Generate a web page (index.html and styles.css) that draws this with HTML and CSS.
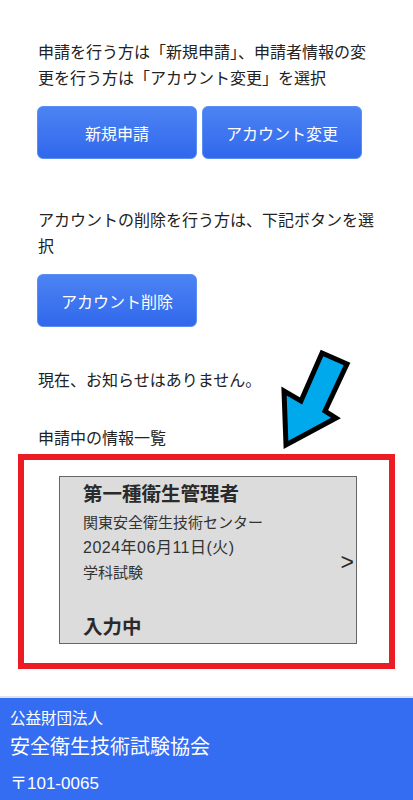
FILE: index.html
```html
<!DOCTYPE html>
<html lang="ja">
<head>
    <meta charset="UTF-8">
    <meta name="viewport" content="width=device-width, initial-scale=1.0">
    <title>マイページ</title>
    <link rel="stylesheet" href="styles.css">
</head>
<body>
    <div class="main">
        <div class="section">
            <p class="note">申請を行う方は「新規申請」、申請者情報の変更を行う方は「アカウント変更」を選択</p>
            <div class="btn-row">
                <button class="btn">新規申請</button>
                <button class="btn">アカウント変更</button>
            </div>
        </div>

        <div class="section delete">
            <p class="note">アカウントの削除を行う方は、下記ボタンを選択</p>
            <div class="btn-row">
                <button class="btn">アカウント削除</button>
            </div>
        </div>

        <p class="note news">現在、お知らせはありません。</p>
        <p class="note list-title">申請中の情報一覧</p>

        <div class="highlight">
            <div class="card">
                <div class="card-info">
                    <div class="card-title">第一種衛生管理者</div>
                    <div class="card-line">関東安全衛生技術センター</div>
                    <div class="card-line date">2024年06月11日(火)</div>
                    <div class="card-line">学科試験</div>
                    <div class="card-status">入力中</div>
                </div>
                <div class="card-arrow">&gt;</div>
            </div>
        </div>

        <svg class="pointer" width="90" height="120" viewBox="0 0 90 120">
            <polygon points="52,13 77,24 55,71 66,78 16,105 14,51 31,61" fill="#00a9ec" stroke="#000" stroke-width="5" stroke-linejoin="miter"/>
        </svg>
    </div>

    <footer class="footer">
        <div class="org-type">公益財団法人</div>
        <div class="org-name">安全衛生技術試験協会</div>
        <div class="org-zip">〒101-0065</div>
    </footer>
</body>
</html>
```

FILE: styles.css
```css
body {
    margin: 0;
    font-family: "Liberation Sans", "Noto Sans CJK JP", sans-serif;
    color: #222;
    background-color: white;
}
.main {
    position: relative;
    padding: 40px 18px 27px 18px;
}
.note {
    margin: 0;
    padding-left: 20px;
    font-size: 16px;
    line-height: 26px;
}
.section .note {
    padding-right: 20px;
}
.btn-row {
    display: flex;
    gap: 5px;
    margin-top: 14px;
    padding-left: 19px;
}
.btn {
    width: 160px;
    height: 53px;
    border: 1px solid #5c8ef2;
    border-radius: 6px;
    background: linear-gradient(#4c83f3, #3168ec);
    color: white;
    font-family: "Liberation Sans", "Noto Sans CJK JP", sans-serif;
    font-size: 16px;
}
.delete {
    margin-top: 49px;
}
.news {
    margin-top: 41px;
}
.list-title {
    margin-top: 32px;
}
.highlight {
    margin-top: 2px;
    border: 6px solid #ec1c24;
    padding: 16px 32px 19px 35px;
}
.card {
    display: flex;
    width: 298px;
    box-sizing: border-box;
    border: 1px solid #666;
    background-color: #dcdcdc;
    padding: 5px 2px 4px 23px;
    color: #2a2a2a;
}
.card-info {
    flex: 1;
}
.card-title, .card-status {
    font-size: 19.5px;
    font-weight: bold;
    line-height: 24px;
}
.card-title {
    margin-bottom: 4px;
}
.card-line {
    font-size: 15px;
    line-height: 25px;
    color: #333;
}
.card-line.date {
    font-size: 16px;
    letter-spacing: 0.5px;
}
.card-status {
    margin-top: 30px;
}
.card-arrow {
    align-self: center;
    font-size: 23px;
    margin-top: 4px;
}
.pointer {
    position: absolute;
    left: 270px;
    top: 340px;
}
.footer {
    background-color: #346df1;
    border-top: 2px solid #dde4f0;
    color: white;
    padding: 10px 10px 20px;
}
.org-type {
    font-size: 15.5px;
    line-height: 22px;
}
.org-name {
    font-size: 20px;
    line-height: 28px;
    margin-top: 3px;
}
.org-zip {
    font-size: 17px;
    line-height: 24px;
    margin-top: 11px;
}
```
